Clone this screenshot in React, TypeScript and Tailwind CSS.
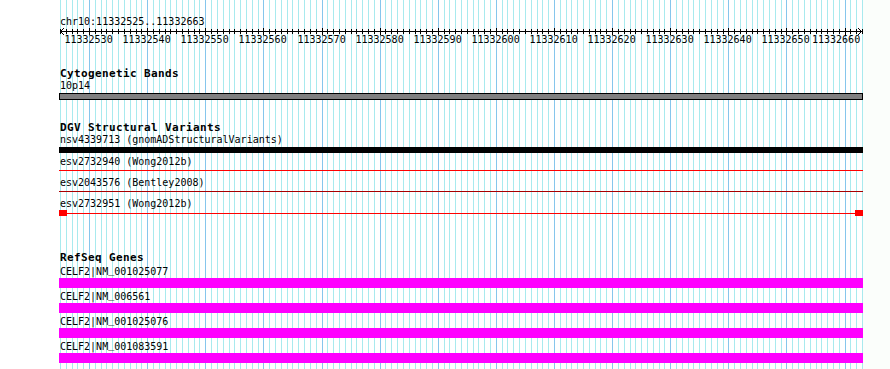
import React from 'react';

const START = 11332525;
const END = 11332663;
const X0 = 60;
const BP = 802 / (END - START);
const xOf = (pos: number) => Math.round(X0 + (pos - START) * BP);

const positions: number[] = [];
for (let p = START; p <= END; p++) positions.push(p);
const majors = positions.filter((p) => p % 10 === 0);

const Grid: React.FC = () => (
  <svg className="absolute inset-0" width={890} height={369} shapeRendering="crispEdges">
    <rect x={863} y={0} width={27} height={369} fill="#fbfefb" />
    {positions.map((p) => (
      <line
        key={p}
        x1={xOf(p) + 0.5}
        x2={xOf(p) + 0.5}
        y1={0}
        y2={369}
        stroke={p % 10 === 0 ? '#86c6ec' : '#a8eaee'}
        strokeWidth={1}
      />
    ))}
  </svg>
);

// ruler in local coords, left edge = page x 59
const Ruler: React.FC = () => {
  const lx = (p: number) => xOf(p) - 59 + 0.5;
  return (
    <svg width={804} height={19} className="block overflow-visible">
      <g shapeRendering="crispEdges" stroke="#000" strokeWidth={1}>
        <line x1={1} x2={803} y1={4.5} y2={4.5} />
        {positions.map((p) => (
          <line key={p} x1={lx(p)} x2={lx(p)} y1={p % 10 === 0 ? 1 : 2} y2={p % 10 === 0 ? 8 : 7} />
        ))}
      </g>
      <polyline points="5,1 1.5,4.5 5,8" fill="none" stroke="#000" strokeWidth={1} />
      <polyline points="799,1 802.5,4.5 799,8" fill="none" stroke="#000" strokeWidth={1} />
      {majors.map((p) => {
        // keep the label inside the track, as the original does
        const start = Math.min(lx(p) - 25, 801 - 48);
        return (
          <text
            key={p}
            x={start}
            y={16}
            fontFamily="'DejaVu Sans Mono', 'Liberation Mono', monospace"
            fontSize={10}
            fill="#000"
          >
            {p}
          </text>
        );
      })}
    </svg>
  );
};

const Label: React.FC<{ children: React.ReactNode; className?: string }> = ({ children, className = '' }) => (
  <div className={`h-[10px] pl-px text-[10px] leading-[9px] whitespace-pre text-black ${className}`}>{children}</div>
);

const Title: React.FC<{ children: React.ReactNode; className?: string }> = ({ children, className = '' }) => (
  <div className={`h-[11px] pl-px text-[11px] leading-[11px] tracking-[0.38px] font-bold whitespace-pre text-black ${className}`}>
    {children}
  </div>
);

// the underscore of the bitmap font sits on the baseline, not below it
const GeneName: React.FC<{ name: string }> = ({ name }) => {
  const [a, b] = name.split('_');
  return (
    <>
      {a}
      <span className="relative -top-[2px]">_</span>
      {b}
    </>
  );
};

const genes = ['CELF2|NM_001025077', 'CELF2|NM_006561', 'CELF2|NM_001025076', 'CELF2|NM_001083591'];

export default function App() {
  return (
    <div className="relative w-[890px] h-[369px] overflow-hidden bg-white font-['DejaVu_Sans_Mono','Liberation_Mono',monospace]">
      <Grid />
      <div className="relative flex flex-col w-[863px] pl-[59px]">
        <Label className="mt-[17px]">chr10:11332525..11332663</Label>
        <Ruler />

        <Title className="mt-[22px]">Cytogenetic Bands</Title>
        <Label className="mt-[2px]">10p14</Label>
        <div className="mt-[2px] h-[7px] border border-black bg-[#808080]" />

        <Title className="mt-[22px]">DGV Structural Variants</Title>
        <Label className="mt-[2px]">nsv4339713 (gnomADStructuralVariants)</Label>
        <div className="mt-[2px] h-[6px] bg-black" />

        <Label className="mt-[4px]">esv2732940 (Wong2012b)</Label>
        <div className="mt-[3px] h-px bg-[#ff0000]" />
        <Label className="mt-[7px]">esv2043576 (Bentley2008)</Label>
        <div className="mt-[3px] h-px bg-[#a80000]" />
        <Label className="mt-[7px]">esv2732951 (Wong2012b)</Label>
        <div className="mt-[1px] flex items-center h-[6px]">
          <div className="w-[8px] h-[6px] bg-[#ff0000]" />
          <div className="flex-1 h-px bg-[#ff0000]" />
          <div className="w-[8px] h-[6px] bg-[#ff0000]" />
        </div>

        <Title className="mt-[36px]">RefSeq Genes</Title>
        {genes.map((g) => (
          <div key={g} className="mt-[4px]">
            <Label>
              <GeneName name={g} />
            </Label>
            <div className="mt-[1px] h-[10px] bg-[#ff00ff]" />
          </div>
        ))}
      </div>
    </div>
  );
}
